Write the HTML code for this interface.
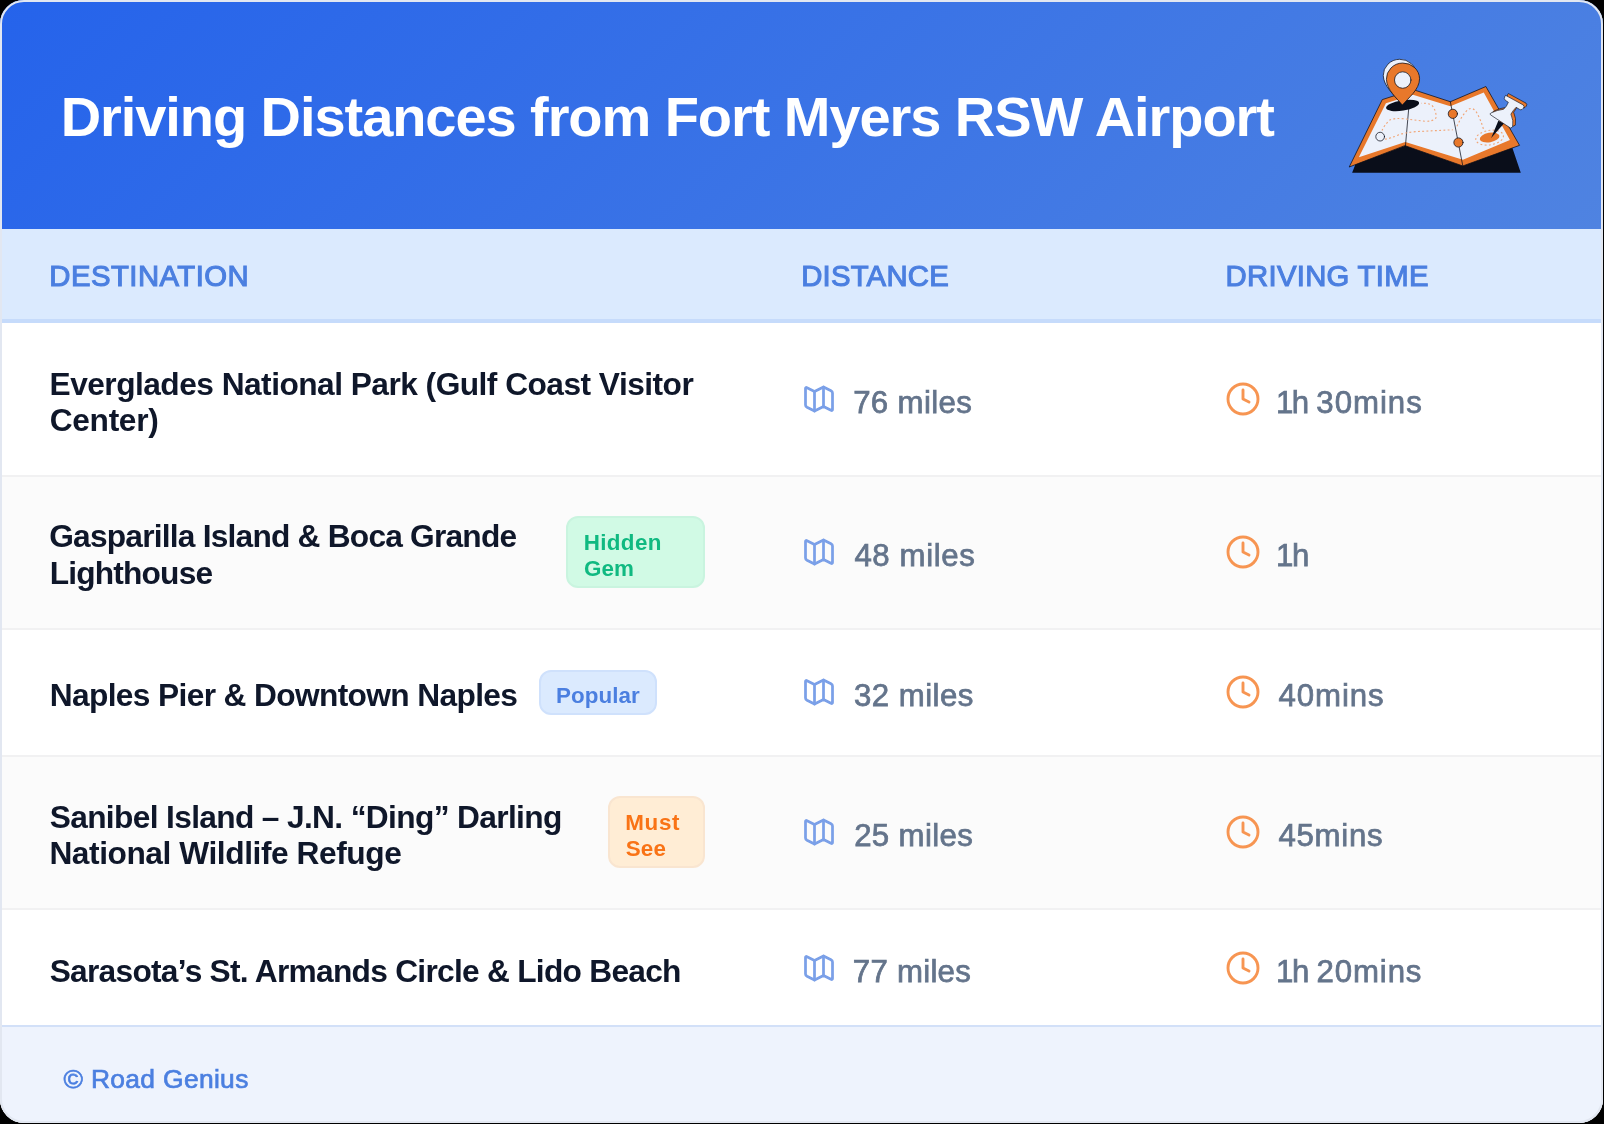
<!DOCTYPE html>
<html><head><meta charset="utf-8">
<style>
*{margin:0;padding:0;box-sizing:border-box}
html,body{width:1604px;height:1124px;background:#000;overflow:hidden}
body{font-family:"Liberation Sans",sans-serif;position:relative}
.card{position:absolute;left:0;top:0;width:1603px;height:1123px;border-radius:24px;background:#fff;overflow:hidden;filter:contrast(1)}
.frame{position:absolute;left:0;top:0;width:1603px;height:1123px;border-radius:24px;border:2px solid #e2e7f1;z-index:50;pointer-events:none}
.hdr{position:absolute;left:0;top:0;width:1603px;height:229px;background:linear-gradient(135deg,#2563eb 0%,#4f83e1 100%)}
.x{position:absolute;white-space:nowrap;line-height:1}
.title{font-weight:700;color:#fff}
.cols{position:absolute;left:0;top:229px;width:1603px;height:93.5px;background:#dbeafe;border-bottom:4px solid #c6dbfb}
.ch{font-weight:400;color:#4b7fe0;-webkit-text-stroke:1.1px #4b7fe0}
.row{position:absolute;left:0;width:1603px;background:#fff;border-bottom:2px solid #f1f1f2}
.row.alt{background:#fbfbfb}
.t{font-weight:700;color:#0f172a}
.v{color:#64748b;-webkit-text-stroke:0.75px #64748b}
.ic{position:absolute;width:36px;height:36px;overflow:visible}
.badge{position:absolute;border-radius:12px;border:2px solid}
.bt{font-weight:700}
.b-g{background:#d1fae5;border-color:#c9f4df}.c-g{color:#10b981}
.b-b{background:#dbeafe;border-color:#cfe1fc}.c-b{color:#4b7fe0}
.b-o{background:#ffedd5;border-color:#f9e5d0}.c-o{color:#f97316}
.foot{position:absolute;left:0;top:1025px;width:1603px;height:98px;background:#eef3fd;border-top:2px solid #d2e0f8}
.ft{color:#4b7fe0;-webkit-text-stroke:0.7px #4b7fe0}
</style></head>
<body>
<div class="card">
  <div class="hdr"></div>
  <div class="cols"></div>
  <div class="row" style="top:322.5px;height:154px"></div>
  <div class="row alt" style="top:476.5px;height:153.5px"></div>
  <div class="row" style="top:630px;height:126.5px"></div>
  <div class="row alt" style="top:756.5px;height:153.5px"></div>
  <div class="row" style="top:910px;height:116px;border-bottom:none"></div>
  <div class="foot"></div>

  
  <div class="badge b-g" style="left:566px;top:516px;width:139px;height:72px"></div>
  <div class="badge b-b" style="left:538.5px;top:670px;width:118.7px;height:44.6px"></div>
  <div class="badge b-o" style="left:608px;top:796px;width:97px;height:72px"></div>

  
  <div class="x title" id="title" style="left:60.70px;top:89.11px;font-size:56px;letter-spacing:-1.068px">Driving Distances from Fort Myers RSW Airport</div>
  <div class="x ch" id="ch1" style="left:49.37px;top:260.60px;font-size:29.3px;letter-spacing:0.455px">DESTINATION</div>
  <div class="x ch" id="ch2" style="left:801.18px;top:260.60px;font-size:29.3px;letter-spacing:0.223px">DISTANCE</div>
  <div class="x ch" id="ch3" style="left:1225.53px;top:260.60px;font-size:29.3px;letter-spacing:0.302px">DRIVING TIME</div>

  <div class="x t" id="r1a" style="left:49.54px;top:369.00px;font-size:31.7px;letter-spacing:-0.526px">Everglades National Park (Gulf Coast Visitor</div>
  <div class="x t" id="r1b" style="left:49.72px;top:405.00px;font-size:31.7px;letter-spacing:-0.316px">Center)</div>
  <div class="x t" id="r2a" style="left:49.25px;top:521.41px;font-size:31.7px;letter-spacing:-0.782px">Gasparilla Island &amp; Boca Grande</div>
  <div class="x t" id="r2b" style="left:49.68px;top:557.80px;font-size:31.7px;letter-spacing:-0.816px">Lighthouse</div>
  <div class="x t" id="r3a" style="left:49.66px;top:680.21px;font-size:31.7px;letter-spacing:-0.631px">Naples Pier &amp; Downtown Naples</div>
  <div class="x t" id="r4a" style="left:49.69px;top:801.50px;font-size:31.7px;letter-spacing:-0.648px">Sanibel Island – J.N. “Ding” Darling</div>
  <div class="x t" id="r4b" style="left:49.38px;top:837.50px;font-size:31.7px;letter-spacing:-0.432px">National Wildlife Refuge</div>
  <div class="x t" id="r5a" style="left:49.70px;top:955.80px;font-size:31.7px;letter-spacing:-0.726px">Sarasota’s St. Armands Circle &amp; Lido Beach</div>

  <div class="x v" id="d1" style="left:853.16px;top:387.00px;font-size:31.2px;letter-spacing:0.359px">76 miles</div>
  <div class="x v" id="d2" style="left:854.38px;top:540.00px;font-size:31.2px;letter-spacing:0.606px">48 miles</div>
  <div class="x v" id="d3" style="left:853.94px;top:679.91px;font-size:31.2px;letter-spacing:0.468px">32 miles</div>
  <div class="x v" id="d4" style="left:854.14px;top:819.90px;font-size:31.2px;letter-spacing:0.381px">25 miles</div>
  <div class="x v" id="d5" style="left:852.85px;top:955.71px;font-size:31.2px;letter-spacing:0.257px">77 miles</div>

  <div class="x v" id="m1a" style="left:1276.10px;top:387.00px;font-size:31.2px;letter-spacing:-1.711px">1h</div>
  <div class="x v" id="m1b" style="left:1316.32px;top:387.00px;font-size:31.2px;letter-spacing:0.983px">30mins</div>
  <div class="x v" id="m2" style="left:1276.10px;top:540.00px;font-size:31.2px;letter-spacing:-1.471px">1h</div>
  <div class="x v" id="m3" style="left:1278.59px;top:679.91px;font-size:31.2px;letter-spacing:0.895px">40mins</div>
  <div class="x v" id="m4" style="left:1278.38px;top:819.90px;font-size:31.2px;letter-spacing:0.750px">45mins</div>
  <div class="x v" id="m5a" style="left:1276.07px;top:955.81px;font-size:31.2px;letter-spacing:-1.415px">1h</div>
  <div class="x v" id="m5b" style="left:1316.56px;top:955.81px;font-size:31.2px;letter-spacing:0.872px">20mins</div>

  <div class="x bt c-g" id="bg1" style="left:583.68px;top:531.71px;font-size:22.4px;letter-spacing:0.370px">Hidden</div>
  <div class="x bt c-g" id="bg2" style="left:583.99px;top:558.01px;font-size:22.4px;letter-spacing:0.015px">Gem</div>
  <div class="x bt c-b" id="bb1" style="left:555.89px;top:684.80px;font-size:22.4px;letter-spacing:0.099px">Popular</div>
  <div class="x bt c-o" id="bo1" style="left:625.17px;top:811.71px;font-size:22.4px;letter-spacing:0.700px">Must</div>
  <div class="x bt c-o" id="bo2" style="left:625.82px;top:838.01px;font-size:22.4px;letter-spacing:0.099px">See</div>

  <div class="x ft" id="ft" style="left:63.49px;top:1065.60px;font-size:26.4px;letter-spacing:0.336px">© Road Genius</div>
  
<svg class="ic" style="left:801.1px;top:380.80px" viewBox="0 0 36 36" fill="none" stroke="#7ba0e8" stroke-width="2.75" stroke-linejoin="round" stroke-linecap="round"><path d="M4.5 7.6 Q4.5 6 6 6.7 L13.5 10.4 L22.5 6 L30 9.7 Q31.5 10.5 31.5 12 V28.4 Q31.5 30 30 29.3 L22.5 25.5 L13.5 30 L6 26.3 Q4.5 25.5 4.5 24 Z"/><path d="M13.5 10.4 V30"/><path d="M22.5 6 V25.5"/></svg>
<svg class="ic" style="left:1225.1px;top:380.80px" viewBox="0 0 36 36" fill="none" stroke="#f79552" stroke-width="2.9" stroke-linejoin="round" stroke-linecap="round"><circle cx="18" cy="18" r="15"/><path d="M18 9 V18 L24 21"/></svg>
<svg class="ic" style="left:801.1px;top:534.25px" viewBox="0 0 36 36" fill="none" stroke="#7ba0e8" stroke-width="2.75" stroke-linejoin="round" stroke-linecap="round"><path d="M4.5 7.6 Q4.5 6 6 6.7 L13.5 10.4 L22.5 6 L30 9.7 Q31.5 10.5 31.5 12 V28.4 Q31.5 30 30 29.3 L22.5 25.5 L13.5 30 L6 26.3 Q4.5 25.5 4.5 24 Z"/><path d="M13.5 10.4 V30"/><path d="M22.5 6 V25.5"/></svg>
<svg class="ic" style="left:1225.1px;top:534.25px" viewBox="0 0 36 36" fill="none" stroke="#f79552" stroke-width="2.9" stroke-linejoin="round" stroke-linecap="round"><circle cx="18" cy="18" r="15"/><path d="M18 9 V18 L24 21"/></svg>
<svg class="ic" style="left:801.1px;top:674.25px" viewBox="0 0 36 36" fill="none" stroke="#7ba0e8" stroke-width="2.75" stroke-linejoin="round" stroke-linecap="round"><path d="M4.5 7.6 Q4.5 6 6 6.7 L13.5 10.4 L22.5 6 L30 9.7 Q31.5 10.5 31.5 12 V28.4 Q31.5 30 30 29.3 L22.5 25.5 L13.5 30 L6 26.3 Q4.5 25.5 4.5 24 Z"/><path d="M13.5 10.4 V30"/><path d="M22.5 6 V25.5"/></svg>
<svg class="ic" style="left:1225.1px;top:674.25px" viewBox="0 0 36 36" fill="none" stroke="#f79552" stroke-width="2.9" stroke-linejoin="round" stroke-linecap="round"><circle cx="18" cy="18" r="15"/><path d="M18 9 V18 L24 21"/></svg>
<svg class="ic" style="left:801.1px;top:814.25px" viewBox="0 0 36 36" fill="none" stroke="#7ba0e8" stroke-width="2.75" stroke-linejoin="round" stroke-linecap="round"><path d="M4.5 7.6 Q4.5 6 6 6.7 L13.5 10.4 L22.5 6 L30 9.7 Q31.5 10.5 31.5 12 V28.4 Q31.5 30 30 29.3 L22.5 25.5 L13.5 30 L6 26.3 Q4.5 25.5 4.5 24 Z"/><path d="M13.5 10.4 V30"/><path d="M22.5 6 V25.5"/></svg>
<svg class="ic" style="left:1225.1px;top:814.25px" viewBox="0 0 36 36" fill="none" stroke="#f79552" stroke-width="2.9" stroke-linejoin="round" stroke-linecap="round"><circle cx="18" cy="18" r="15"/><path d="M18 9 V18 L24 21"/></svg>
<svg class="ic" style="left:801.1px;top:949.50px" viewBox="0 0 36 36" fill="none" stroke="#7ba0e8" stroke-width="2.75" stroke-linejoin="round" stroke-linecap="round"><path d="M4.5 7.6 Q4.5 6 6 6.7 L13.5 10.4 L22.5 6 L30 9.7 Q31.5 10.5 31.5 12 V28.4 Q31.5 30 30 29.3 L22.5 25.5 L13.5 30 L6 26.3 Q4.5 25.5 4.5 24 Z"/><path d="M13.5 10.4 V30"/><path d="M22.5 6 V25.5"/></svg>
<svg class="ic" style="left:1225.1px;top:949.50px" viewBox="0 0 36 36" fill="none" stroke="#f79552" stroke-width="2.9" stroke-linejoin="round" stroke-linecap="round"><circle cx="18" cy="18" r="15"/><path d="M18 9 V18 L24 21"/></svg>
<svg class="illus" style="position:absolute;left:1340px;top:50px;width:200px;height:140px;overflow:visible" viewBox="0 0 1604 1123">
  <g stroke-linejoin="round" stroke-linecap="round">
    <!-- base shadow -->
    <path d="M97 985 L150 850 L523 730 L985 890 L1372 755 L1450 985 Z" fill="#0a0e1a"/>
    <!-- map outer -->
    <path d="M75 936 L339 398 L588 318 L885 415 L1170 293 L1440 765 L985 930 L523 768 Z" fill="#e8782b" stroke="#0a0e1a" stroke-width="6"/>
    <!-- map inner -->
    <path d="M151 860 L368 428 L585 358 L885 452 L1153 340 L1363 722 L986 880 L524 738 Z" fill="#ecf1fb"/>
    <!-- fold lines -->
    <path d="M551 470 L525 768" fill="none" stroke="#0a0e1a" stroke-width="6"/>
    <path d="M885 415 L985 930" fill="none" stroke="#0a0e1a" stroke-width="6"/>
    <!-- dashed routes -->
    <g fill="none" stroke="#f1a677" stroke-width="9" stroke-dasharray="15 19" stroke-linecap="butt">
      <path d="M362 715 Q400 712 468 681 Q525 662 605 655 L905 640"/>
      <path d="M337 646 Q352 606 400 561 Q440 544 514 552 L685 572 Q742 574 770 544 Q775 492 736 441 Q700 424 650 427"/>
      <path d="M938 612 Q985 510 1030 475 Q1065 455 1095 500 Q1130 560 1155 650"/>
      <ellipse cx="1200" cy="703" rx="112" ry="58" transform="rotate(-9 1200 703)"/>
    </g>
    <!-- target ellipse -->
    <ellipse cx="1200" cy="702" rx="80" ry="38" transform="rotate(-10 1200 702)" fill="#e8782b"/>
    <!-- dots -->
    <circle cx="905" cy="512" r="37" fill="#e8782b" stroke="#0a0e1a" stroke-width="6"/>
    <circle cx="950" cy="742" r="37" fill="#e8782b" stroke="#0a0e1a" stroke-width="6"/>
    <circle cx="322" cy="695" r="35" fill="#ecf1fb" stroke="#0a0e1a" stroke-width="6"/>
    <!-- location pin -->
    <ellipse cx="502" cy="445" rx="134" ry="41" transform="rotate(-9 502 445)" fill="#0a0e1a"/>
    <path id="pinshape" d="M500 442 C455 385 375 320 372 235 A133 128 0 0 1 638 230 C638 320 545 385 500 442 Z" fill="#ecf1fb" stroke="#0a0e1a" stroke-width="6" transform="translate(-25,-30)"/>
    <path d="M500 442 C455 385 375 320 372 235 A133 128 0 0 1 638 230 C638 320 545 385 500 442 Z" fill="#e8782b" stroke="#0a0e1a" stroke-width="6"/>
    <circle cx="503" cy="241" r="66" fill="#ecf1fb" stroke="#0a0e1a" stroke-width="6"/>
    <!-- pushpin -->
    <g transform="translate(1042.6,240.6) scale(0.4994)">
      <path d="M455 655 L545 700 L340 930 Z" fill="#0a0e1a" stroke="none"/>
      <path id="pp" d="M578 250 L856 402 Q880 422 858 452 L838 472 Q816 486 792 470 L741 438 Q694 486 657 548 Q704 650 684 755 L650 772 L330 560 Q312 545 335 530 Q440 480 540 470 Q592 424 616 358 L566 325 Q540 303 556 272 Z" fill="#e8782b" stroke="#0a0e1a" stroke-width="10" transform="translate(44,-30)"/>
      <path d="M578 250 L856 402 Q880 422 858 452 L838 472 Q816 486 792 470 L741 438 Q694 486 657 548 Q704 650 684 755 L650 772 L330 560 Q312 545 335 530 Q440 480 540 470 Q592 424 616 358 L566 325 Q540 303 556 272 Z" fill="#ecf1fb" stroke="#0a0e1a" stroke-width="10"/>
    </g>
  </g>
</svg>

</div>
<div class="frame"></div>
</body></html>
